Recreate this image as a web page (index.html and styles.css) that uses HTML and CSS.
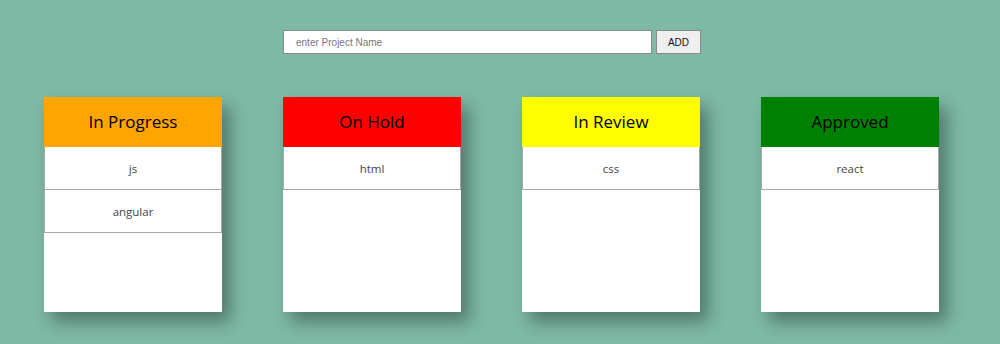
FILE: index.html
```html
<!DOCTYPE html>
<html lang="en">
<head>
  <meta charset="UTF-8" />
  <meta name="viewport" content="width=device-width, initial-scale=1.0" />
  <title>Kanban</title>
  <link rel="stylesheet" href="styles.css">
</head>
<body>

  <!-- Formulario -->
  <div class="form">
    <input type="text" class="input-proyecto" placeholder="enter Project Name" />
    <button class="boton-add">ADD</button>
  </div>

  <!-- Columnas -->
  <div class="tablero">
    <div class="columna">
      <div class="cabecera naranja">In Progress</div>
      <div class="item">js</div>
      <div class="item">angular</div>
    </div>
    <div class="columna">
      <div class="cabecera rojo">On Hold</div>
      <div class="item">html</div>
    </div>
    <div class="columna">
      <div class="cabecera amarillo">In Review</div>
      <div class="item">css</div>
    </div>
    <div class="columna">
      <div class="cabecera verde">Approved</div>
      <div class="item">react</div>
    </div>
  </div>

</body>
</html>
```

FILE: styles.css
```css
body {
  margin: 0;
  background: #7db9a4;
  font-family: "Open Sans", "Noto Sans", sans-serif;
}

/* Formulario */
.form {
  display: flex;
  gap: 4px;
  padding: 30px 0 0 283px;
}

.input-proyecto {
  width: 369px;
  height: 24px;
  box-sizing: border-box;
  border: 1px solid #8a8a8a;
  padding: 0 12px;
  font-family: "Liberation Sans", Arial, sans-serif;
  font-size: 10px;
  color: #333;
  outline: none;
}

.input-proyecto::placeholder {
  color: #777;
}

.boton-add {
  width: 45px;
  height: 24px;
  box-sizing: border-box;
  border: 1px solid #8a8a8a;
  background: #efefef;
  font-family: "Liberation Sans", Arial, sans-serif;
  font-size: 10px;
  color: #111;
  padding: 0;
}

/* Tablero */
.tablero {
  display: flex;
  gap: 61px;
  padding: 43px 0 40px 44px;
}

.columna {
  width: 178px;
  height: 215px;
  background: #fff;
  box-shadow: 8px 10px 16px rgba(0, 0, 0, 0.35);
}

.cabecera {
  height: 50px;
  display: flex;
  align-items: center;
  justify-content: center;
  font-size: 17px;
  color: #000;
  padding-bottom: 1px;
  box-sizing: border-box;
}

.naranja { background: #ffa500; }
.rojo { background: #ff0000; }
.amarillo { background: #ffff00; }
.verde { background: #008000; }

.item {
  height: 42px;
  display: flex;
  align-items: center;
  justify-content: center;
  border: 1px solid #a8a8a8;
  border-top: none;
  font-size: 11.5px;
  color: #444;
}
```
